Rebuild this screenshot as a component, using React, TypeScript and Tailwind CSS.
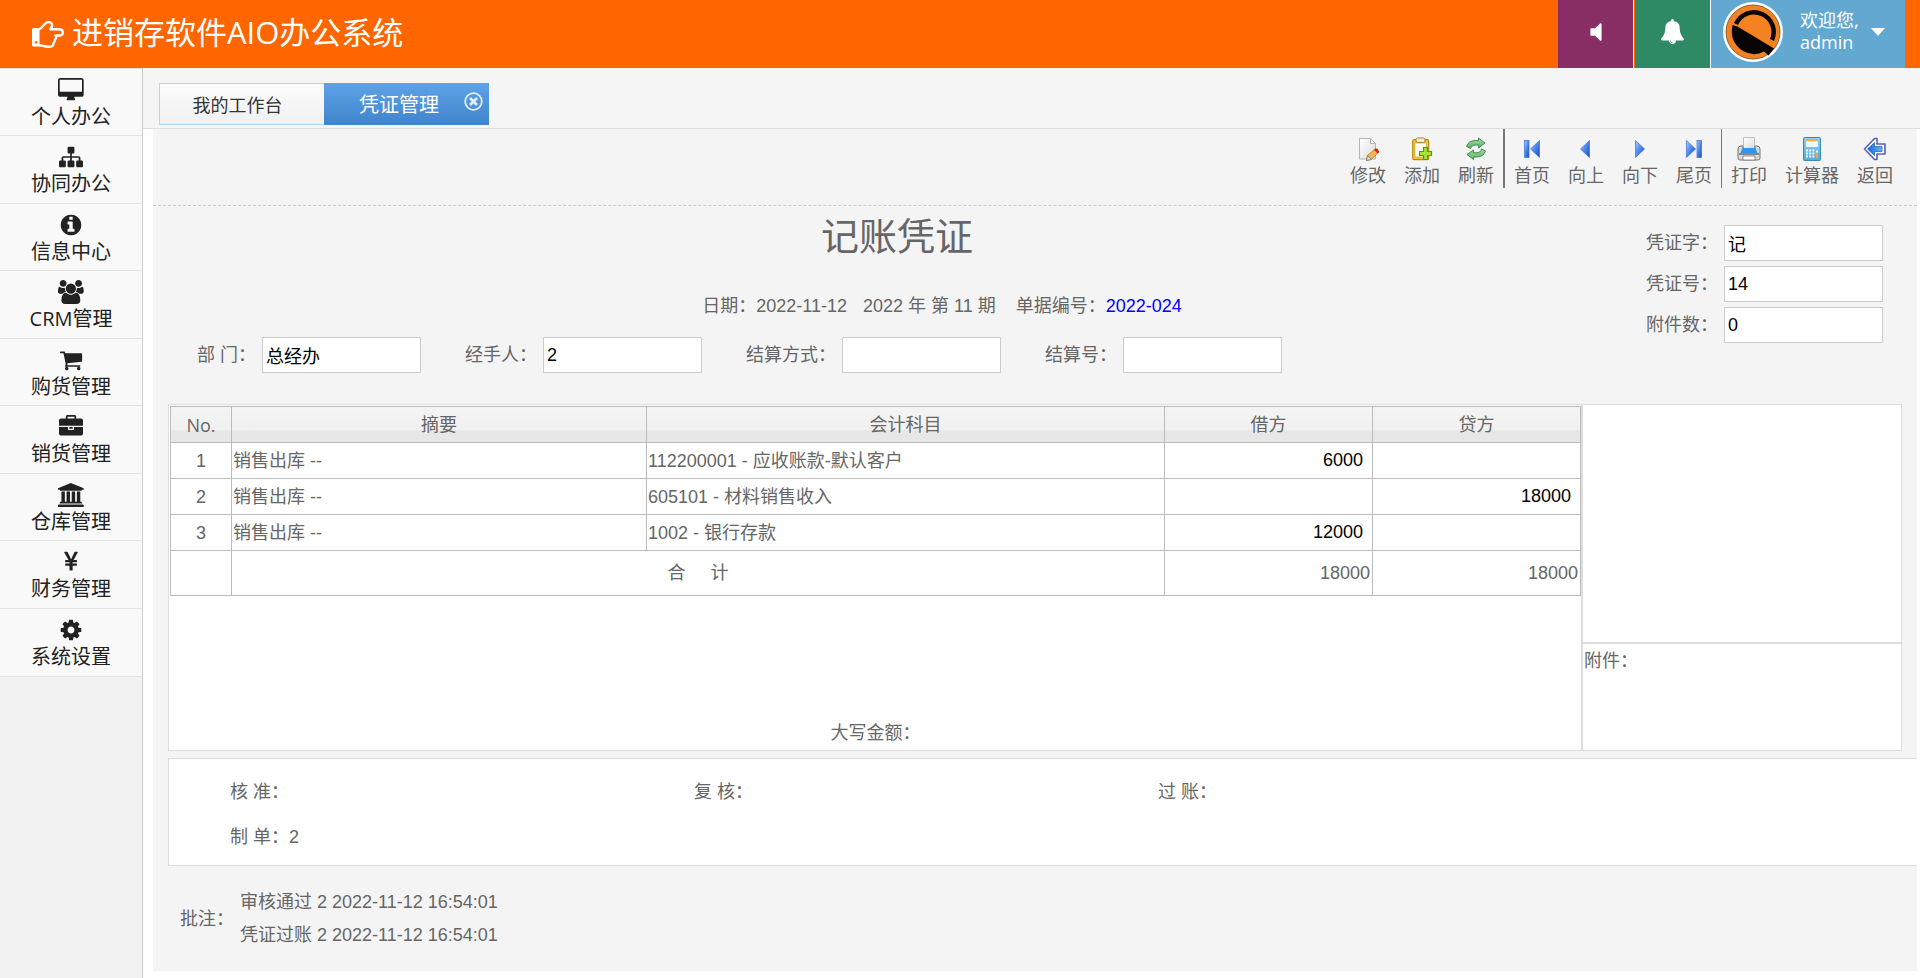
import type { ReactNode } from 'react';

const SANS = "font-['Liberation_Sans','Noto_Sans_CJK_SC',sans-serif]";
const UI = "font-['Open_Sans','Noto_Sans_CJK_SC',sans-serif]";

interface GlyphProps {
  d: string;
  viewBox?: string;
  className?: string;
}

function Glyph({ d, viewBox = '0 0 1792 1792', className = 'h-6' }: GlyphProps) {
  return (
    <svg viewBox={viewBox} className={className} fill="currentColor" aria-hidden>
      <path d={d} />
    </svg>
  );
}

const VOLUME =
  'M1280 352v1088q0 26-19 45t-45 19-45-19l-333-333h-262q-26 0-45-19t-19-45v-384q0-26 19-45t45-19h262l333-333q19-19 45-19t45 19 19 45z';
const BELL =
  'M912 1696q0-16-16-16-59 0-101.500-42.500t-42.500-101.500q0-16-16-16t-16 16q0 73 51.500 124.500t124.500 51.500q16 0 16-16zM1728 1408q0 52-38 90t-90 38h-448q0 106-75 181t-181 75-181-75-75-181h-448q-52 0-90-38t-38-90q50-42 91-88t85-119.500 74.500-158.500 50-206 19.500-260q0-152 117-282.500t307-158.500q-8-19-8-39 0-40 28-68t68-28 68 28 28 68q0 20-8 39 190 28 307 158.500t117 282.500q0 139 19.500 260t50 206 74.500 158.500 85 119.500 91 88z';

const menu = [
  {
    label: '个人办公',
    viewBox: '-64 0 1920 1792',
    d: 'M1728 992v-832q0-13-9.500-22.500t-22.500-9.500h-1600q-13 0-22.500 9.500t-9.500 22.500v832q0 13 9.500 22.500t22.500 9.500h1600q13 0 22.500-9.500t9.500-22.500zM1856 160v1088q0 66-47 113t-113 47h-544q0 37 16 77.500t32 71 16 43.500q0 26-19 45t-45 19h-512q-26 0-45-19t-19-45q0-14 16-44t32-70 16-78h-544q-66 0-113-47t-47-113v-1088q0-66 47-113t113-47h1600q66 0 113 47t47 113z',
  },
  {
    label: '协同办公',
    d: 'M1792 1248v320q0 40-28 68t-68 28h-320q-40 0-68-28t-28-68v-320q0-40 28-68t68-28h96v-192h-512v192h96q40 0 68 28t28 68v320q0 40-28 68t-68 28h-320q-40 0-68-28t-28-68v-320q0-40 28-68t68-28h96v-192h-512v192h96q40 0 68 28t28 68v320q0 40-28 68t-68 28h-320q-40 0-68-28t-28-68v-320q0-40 28-68t68-28h96v-192q0-52 38-90t90-38h512v-192h-96q-40 0-68-28t-28-68v-320q0-40 28-68t68-28h320q40 0 68 28t28 68v320q0 40-28 68t-68 28h-96v192h512q52 0 90 38t38 90v192h96q40 0 68 28t28 68z',
  },
  {
    label: '信息中心',
    d: 'M1152 1376v-160q0-14-9-23t-23-9h-96v-512q0-14-9-23t-23-9h-320q-14 0-23 9t-9 23v160q0 14 9 23t23 9h96v320h-96q-14 0-23 9t-9 23v160q0 14 9 23t23 9h448q14 0 23-9t9-23zM1024 480v-160q0-14-9-23t-23-9h-192q-14 0-23 9t-9 23v160q0 14 9 23t23 9h192q14 0 23-9t9-23zM1664 896q0 209-103 385.500t-279.500 279.500-385.500 103-385.500-103-279.500-279.500-103-385.500 103-385.500 279.500-279.500 385.500-103 385.500 103 279.500 279.500 103 385.500z',
  },
  {
    label: 'CRM管理',
    viewBox: '0 0 1920 1792',
    d: 'M593 896q-162 5-265 128h-134q-82 0-138-40.500t-56-118.500q0-353 124-353 6 0 43.500 21t97.500 42.500 119 21.500q67 0 133-23-5 37-5 66 0 139 81 256zM1664 1533q0 120-73 189.500t-194 69.500h-874q-121 0-194-69.500t-73-189.500q0-53 3.500-103.500t14-109 26.500-108.500 43-97.500 62-81 85.500-53.500 111.500-20q10 0 43 21.500t73 48 107 48 135 21.500 135-21.500 107-48 73-48 43-21.500q61 0 111.500 20t85.500 53.500 62 81 43 97.500 26.500 108.500 14 109 3.500 103.500zM640 256q0 106-75 181t-181 75-181-75-75-181 75-181 181-75 181 75 75 181zM1344 640q0 159-112.500 271.500t-271.500 112.500-271.500-112.500-112.500-271.500 112.500-271.500 271.500-112.500 271.500 112.500 112.500 271.500zM1920 865q0 78-56 118.500t-138 40.500h-134q-103-123-265-128 81-117 81-256 0-29-5-66 66 23 133 23 59 0 119-21.500t97.500-42.500 43.500-21q124 0 124 353zM1792 256q0 106-75 181t-181 75-181-75-75-181 75-181 181-75 181 75 75 181z',
  },
  {
    label: '购货管理',
    d: 'M704 1536q0 52-38 90t-90 38-90-38-38-90 38-90 90-38 90 38 38 90zM1600 1536q0 52-38 90t-90 38-90-38-38-90 38-90 90-38 90 38 38 90zM1728 448v512q0 24-16.500 42.500t-40.500 21.500l-1044 122q13 60 13 70 0 16-24 64h920q26 0 45 19t19 45-19 45-45 19h-1024q-26 0-45-19t-19-45q0-11 8-31.500t16-36 21.500-40 15.500-29.500l-177-823h-204q-26 0-45-19t-19-45 19-45 45-19h256q16 0 28.500 6.500t19.500 15.500 13 24.500 8 26 5.500 29.500 4.500 26h1201q26 0 45 19t19 45z',
  },
  {
    label: '销货管理',
    d: 'M640 256h512v-128h-512v128zM1792 896v480q0 66-47 113t-113 47h-1472q-66 0-113-47t-47-113v-480h672v160q0 26 19 45t45 19h320q26 0 45-19t19-45v-160h672zM1024 896v128h-256v-128h256zM1792 416v384h-1792v-384q0-66 47-113t113-47h352v-160q0-40 28-68t68-28h576q40 0 68 28t28 68v160h352q66 0 113 47t47 113z',
  },
  {
    label: '仓库管理',
    viewBox: '0 0 1920 1792',
    d: 'M960 0l960 384v128h-128q0 26-20.500 45t-48.500 19h-1526q-28 0-48.500-19t-20.500-45h-128v-128zM256 640h256v768h128v-768h256v768h128v-768h256v768h128v-768h256v768h59q28 0 48.500 19t20.500 45v64h-1664v-64q0-26 20.500-45t48.500-19h59v-768zM1851 1600q28 0 48.500 19t20.500 45v128h-1920v-128q0-26 20.500-45t48.500-19h1782z',
  },
  {
    label: '财务管理',
    d: 'M985.500 1536h-172q-13 0-22.500-9t-9.500-23v-330h-288q-13 0-22.500-9t-9.500-23v-103q0-13 9.500-22.500t22.500-9.500h288v-85h-288q-13 0-22.500-9t-9.500-23v-104q0-13 9.500-22.500t22.500-9.500h214l-321-578q-8-16 0-32 10-16 28-16h194q19 0 29 18l215 425q19 38 56 125 10-24 30.500-68t27.500-61l191-420q8-19 29-19h191q17 0 27 16 9 14 1 31l-313 579h215q13 0 22.500 9.500t9.500 22.500v104q0 14-9.500 23t-22.500 9h-290v85h290q13 0 22.500 9.500t9.500 22.500v103q0 14-9.500 23t-22.500 9h-290v330q0 13-9.500 22.500t-22.500 9.500z',
  },
  {
    label: '系统设置',
    d: 'M1152 896q0-106-75-181t-181-75-181 75-75 181 75 181 181 75 181-75 75-181zM1664 787v222q0 12-8 23t-20 13l-185 28q-19 54-39 91 35 50 107 138 10 12 10 25t-9 23q-27 37-99 108t-94 71q-12 0-26-9l-138-108q-44 23-91 38-16 136-29 186-7 28-36 28h-222q-14 0-24.500-8.500t-11.500-21.500l-28-184q-49-16-90-37l-141 107q-10 9-25 9-14 0-25-11-126-114-165-168-7-10-7-23 0-12 8-23 15-21 51-66.500t54-70.500q-27-50-41-99l-183-27q-13-2-21-12.500t-8-23.500v-222q0-12 8-23t19-13l186-28q14-46 39-92-40-57-107-138-10-12-10-24 0-10 9-23 26-36 98.500-107.500t94.500-71.500q13 0 26 10l138 107q44-23 91-38 16-136 29-186 7-28 36-28h222q14 0 24.500 8.500t11.500 21.500l28 184q49 16 90 37l142-107q9-9 24-9 13 0 25 10 129 119 165 170 7 8 7 22 0 12-8 23-15 21-51 66.500t-54 70.500q26 50 41 98l183 28q13 2 21 12.500t8 23.500z',
  },
];

/** Shared gradients for the coloured toolbar icons */
function IconDefs() {
  return (
    <svg className="absolute size-0" aria-hidden>
      <defs>
        <linearGradient id="blue" x1="0" y1="0" x2="1" y2="1">
          <stop offset="0" stopColor="#a9cbfa" />
          <stop offset="0.5" stopColor="#4d86ea" />
          <stop offset="1" stopColor="#1746c4" />
        </linearGradient>
        <linearGradient id="paper" x1="0" y1="0" x2="1" y2="1">
          <stop offset="0" stopColor="#ffffff" />
          <stop offset="1" stopColor="#dcdcdc" />
        </linearGradient>
        <linearGradient id="green" x1="0" y1="0" x2="0" y2="1">
          <stop offset="0" stopColor="#a4dd9c" />
          <stop offset="1" stopColor="#5cb06a" />
        </linearGradient>
        <linearGradient id="calc" x1="0" y1="0" x2="0" y2="1">
          <stop offset="0" stopColor="#8fd0ee" />
          <stop offset="1" stopColor="#5aa9d6" />
        </linearGradient>
        <linearGradient id="arrow" x1="0" y1="0" x2="1" y2="0">
          <stop offset="0" stopColor="#1268d8" />
          <stop offset="1" stopColor="#5fbaf5" />
        </linearGradient>
      </defs>
    </svg>
  );
}

const icons: Record<string, ReactNode> = {
  edit: (
    <>
      <path d="M3.500 1.500h11l5 5v15.500h-16z" fill="url(#paper)" stroke="#b5b5b5" />
      <path d="M14.500 1.500v5h5z" fill="#f4f4f4" stroke="#b5b5b5" />
      <path d="M10.500 23.500l1-5 8-7 3.500 3.500-8 7.500z" fill="#f3b64e" stroke="#b07a2a" strokeWidth="0.800" />
      <path d="M18 12.800l1.500-1.300q3-.5 3.500 3.500l-1.500 1.400z" fill="#e02020" />
      <path d="M10.500 23.500l1-5 4 4z" fill="#ddd" stroke="#777" strokeWidth="0.800" />
    </>
  ),
  add: (
    <>
      <rect x="2.700" y="2.700" width="16" height="20" rx="1.500" fill="#f2c73a" stroke="#b88a12" strokeWidth="1.200" />
      <rect x="5" y="6" width="11.500" height="14" fill="#fffef4" stroke="#c9a13a" strokeWidth="0.700" />
      <rect x="6" y="1" width="9" height="4.500" rx="1.500" fill="#f7eccb" stroke="#a9842a" />
      <path d="M13.500 10.500h4v4h4v4h-4v4h-4v-4h-4v-4h4z" fill="#a5e23a" stroke="#5c9a14" strokeWidth="1.200" />
    </>
  ),
  refresh: (
    <g fill="url(#green)" stroke="#3f8a52" strokeLinejoin="round">
      <path d="M2.500 9.500q2-6 9-6h3v-2.500l6.500 5-6.500 5v-3h-3q-4-.2-5 3.500z" />
      <path d="M21.500 14q-2 6-9 6h-3v2.500l-6.500-5 6.500-4.500v2.800h3q4 .2 5-3.800z" />
    </g>
  ),
  first: (
    <g fill="url(#blue)" stroke="#3a6fe0" strokeWidth="0.700">
      <rect x="4.500" y="3.500" width="4.500" height="17" />
      <path d="M19.500 3.500v17l-9-8.500z" />
    </g>
  ),
  prev: <path d="M15.500 3.500v17l-9-8.500z" fill="url(#blue)" stroke="#3a6fe0" strokeWidth="0.700" />,
  next: <path d="M7.500 3.500v17l9-8.500z" fill="url(#blue)" stroke="#3a6fe0" strokeWidth="0.700" />,
  last: (
    <g fill="url(#blue)" stroke="#3a6fe0" strokeWidth="0.700">
      <rect x="15" y="3.500" width="4.500" height="17" />
      <path d="M4.500 3.500v17l9-8.500z" />
    </g>
  ),
  print: (
    <>
      <path d="M6.500 .5h11v11h-11z" fill="url(#paper)" stroke="#b9c2cc" />
      <path d="M1 12q0-3 3-3h2v3.500h12v-3.500h2q3 0 3 3v9q0 2-2 2h-18q-2 0-2-2z" fill="#d9d9d9" stroke="#777" />
      <path d="M5.500 11h13l2 5h-17z" fill="#2f95ee" />
      <path d="M2 17h20" stroke="#6d6d6d" strokeWidth="1.500" />
      <path d="M6 19h12v4h-12z" fill="#fff" stroke="#777" strokeWidth="0.800" />
    </>
  ),
  calculator: (
    <>
      <rect x="3.500" y=".5" width="17" height="23" rx="1" fill="url(#calc)" stroke="#3b86b5" />
      <rect x="6" y="3" width="12" height="7" fill="#eef7fc" />
      <path d="M6 3.500h12" stroke="#f0a93c" strokeWidth="1.500" />
      <path d="M6 13.500h9M6 16.500h9M6 19.500h9" stroke="#f2fafe" strokeWidth="1.800" strokeDasharray="2 1.200" />
      <path d="M17 13.500v2" stroke="#f2fafe" strokeWidth="2" />
      <path d="M17 16.500v4.500" stroke="#f0a93c" strokeWidth="2" />
    </>
  ),
  back: (
    <>
      <path d="M1.500 12l10-10.500h2.500v5.500h8v10h-8v5.500h-2.500z" fill="#fff" stroke="#5560b8" strokeWidth="1.600" strokeLinejoin="round" />
      <path d="M4.500 12l7-6.500v4h7.500v5h-7.500v4z" fill="url(#arrow)" stroke="#1b56b8" strokeWidth="0.700" />
    </>
  ),
};

const toolGroups = [
  [
    { icon: 'edit', label: '修改' },
    { icon: 'add', label: '添加' },
    { icon: 'refresh', label: '刷新' },
  ],
  [
    { icon: 'first', label: '首页' },
    { icon: 'prev', label: '向上' },
    { icon: 'next', label: '向下' },
    { icon: 'last', label: '尾页' },
  ],
  [
    { icon: 'print', label: '打印' },
    { icon: 'calculator', label: '计算器' },
    { icon: 'back', label: '返回' },
  ],
];

const fields = [
  { id: 'dept', label: '部 门：', value: '总经办' },
  { id: 'handler', label: '经手人：', value: '2' },
  { id: 'method', label: '结算方式：', value: '' },
  { id: 'settle', label: '结算号：', value: '' },
];

const voucherFields = [
  { id: 'word', label: '凭证字：', value: '记' },
  { id: 'number', label: '凭证号：', value: '14' },
  { id: 'attach', label: '附件数：', value: '0' },
];

const entries = [
  { summary: '销售出库 --', account: '112200001 - 应收账款-默认客户', debit: '6000', credit: '' },
  { summary: '销售出库 --', account: '605101 - 材料销售收入', debit: '', credit: '18000' },
  { summary: '销售出库 --', account: '1002 - 银行存款', debit: '12000', credit: '' },
];

function Field({ id, label, value }: { id: string; label: string; value: string }) {
  return (
    <div className="flex items-center gap-1.5">
      <label htmlFor={id} className="whitespace-nowrap">
        {label}
      </label>
      <input
        id={id}
        defaultValue={value}
        className="h-9 w-[159px] border border-[#ccc] bg-white px-[3px] text-black outline-none"
      />
    </div>
  );
}

function Header() {
  return (
    <header className={`flex h-[68px] shrink-0 bg-[#ff6600] text-white ${UI}`}>
      <h1 className="flex flex-1 items-center gap-2 pl-8 text-[31px] leading-[64px]">
        <svg viewBox="0 0 32 27" className="w-8" fill="none" stroke="currentColor" strokeWidth="2.400" strokeLinejoin="round" aria-hidden>
          <path d="M0 8.500q0-1.500 1.500-1.500h6v18.500h-6q-1.500 0-1.500-1.500zM4 20a1.300 1.300 0 1 0 .1 0z" fill="currentColor" stroke="none" fillRule="evenodd" />
          <path d="M7 8.300q1.500-.3 3.500-2.800t3.500-3.500q2.500-1.500 4.500-.5t1.500 3.500q-.5 1.500-1.700 3.200h9.700q2.800.4 2.800 3.200t-2.800 3.100h-4.500q1.500 2-.7 4.500 0 2-1.500 3.500.3 3.200-3.300 3.200-4 .2-7-.8-2.500-.7-4-.7" />
        </svg>
        <span className="pb-1">进销存软件AIO办公系统</span>
      </h1>
      <button aria-label="声音" className="flex w-[76px] items-center justify-center border-r border-white bg-[#892e65] pb-1">
        <Glyph d={VOLUME} className="size-[26px]" />
      </button>
      <button aria-label="通知" className="ml-px flex w-[76px] items-center justify-center border-r border-white bg-[#2e8965] pb-1.5">
        <Glyph d={BELL} className="size-[25px]" />
      </button>
      <button className="mr-[15px] flex w-[194px] items-start bg-[#62a8d1] pt-0.5 pl-3 text-left">
        <svg viewBox="0 0 60 60" className="size-[60px]" aria-hidden>
          <circle cx="30" cy="30" r="30" fill="#fff" />
          <circle cx="30" cy="30" r="27" fill="#f58220" stroke="#6b4a2a" strokeWidth="0.800" />
          <path d="M13 22A19 19 0 1 1 49 38" fill="none" stroke="#080404" strokeWidth="4.500" />
          <path d="M14.500 24.500L51 46.500 45.500 53.500 41 49.500Q31 55 20 49 6 40 9.500 23z" fill="#080404" />
        </svg>
        <span className="ml-[17px] flex-1 pt-[7px] text-lg leading-[22px]">
          欢迎您,
          <br />
          admin
        </span>
        <svg viewBox="0 0 14 8" className="mt-[26px] mr-5 w-3.5" fill="currentColor" aria-hidden>
          <path d="M0 0h14l-7 8z" />
        </svg>
      </button>
    </header>
  );
}

function Sidebar() {
  return (
    <nav className="w-[143px] shrink-0 border-r border-[#ccc] bg-[#f2f2f2]">
      {menu.map(({ label, d, viewBox }) => (
        <a
          key={label}
          href="#"
          className={`flex flex-col items-center border-t border-[#e2e2e2] bg-[#f9f9f9] pt-[9px] text-xl leading-[30px] text-[#222] odd:h-[67px] even:h-[68px] last:h-[69px]! last:border-b ${UI}`}
        >
          <Glyph d={d} viewBox={viewBox} className="h-6 shrink-0" />
          {label}
        </a>
      ))}
    </nav>
  );
}

function Tabs() {
  return (
    <div className={`flex h-[61px] shrink-0 border-b border-[#ddd] bg-[#f5f5f5] pt-[15px] pl-4 ${UI}`}>
      <button className="h-[42px] w-[165px] border border-r-0 border-[#b4d5f2] bg-linear-to-b from-[#fcfcfc] to-[#f0f0f0] pt-0.5 pr-10 pl-[31px] text-lg whitespace-nowrap text-[#333]">
        我的工作台
      </button>
      <div className="flex h-[42px] w-[165px] bg-linear-to-b from-[#5ea2e7] to-[#4084cc] pl-[35px] text-white">
        <button className="pt-0.5 text-xl whitespace-nowrap">凭证管理</button>
        <button aria-label="关闭" className="mt-[9px] ml-[25px] size-[19px]">
          <svg viewBox="0 0 19 19" fill="none" stroke="#e3eefa" aria-hidden>
            <circle cx="9.500" cy="9.500" r="8.300" strokeWidth="1.800" />
            <path d="M6 6l7 7M13 6l-7 7" strokeWidth="2.800" />
          </svg>
        </button>
      </div>
    </div>
  );
}

function Toolbar() {
  return (
    <div className="flex h-[77px] justify-end border-b border-dashed border-[#ccc] pr-[15px]">
      {toolGroups.map((group, i) => (
        <div
          key={i}
          className="flex h-[59px] border-[#777] not-first:border-l first:border-r"
        >
          {group.map(({ icon, label }) => (
            <button key={icon} className="flex flex-col items-center gap-[3px] px-[9px] pt-2 text-lg leading-6">
              <svg viewBox="0 0 24 24" className="size-6 shrink-0" aria-hidden>
                {icons[icon]}
              </svg>
              {label}
            </button>
          ))}
        </div>
      ))}
    </div>
  );
}

function Amount({ label, value }: { label: string; value: string }) {
  return (
    <td className="border border-[#bbb] p-0">
      <input
        aria-label={label}
        defaultValue={value}
        className="block h-[35px] w-full bg-transparent pr-[9px] text-right text-black outline-none"
      />
    </td>
  );
}

function EntryTable() {
  const head = 'border border-[#bbb] font-normal';
  const cell = 'border border-[#bbb] px-px';
  const total = 'border border-[#bbb] pr-0.5 text-right';
  return (
    <table className="w-full table-fixed border-collapse">
      <colgroup>
        <col className="w-[61px]" />
        <col className="w-[415px]" />
        <col />
        <col className="w-[208px]" />
        <col className="w-[208px]" />
      </colgroup>
      <thead>
        <tr className="h-9 bg-linear-to-b from-[#f4f4f4] via-[#f0f0f0] via-64% to-[#e7e7e7] to-66%">
          <th className={`${head} ${UI}`}>No.</th>
          <th className={head}>摘要</th>
          <th className={head}>会计科目</th>
          <th className={head}>借方</th>
          <th className={head}>贷方</th>
        </tr>
      </thead>
      <tbody>
        {entries.map(({ summary, account, debit, credit }, i) => (
          <tr key={account} className="h-9">
            <td className={`${cell} text-center`}>{i + 1}</td>
            <td className={cell}>{summary}</td>
            <td className={cell}>{account}</td>
            <Amount label={`借方 ${i + 1}`} value={debit} />
            <Amount label={`贷方 ${i + 1}`} value={credit} />
          </tr>
        ))}
        <tr className="h-[45px]">
          <td className={cell} />
          <td colSpan={2} className={`${cell} text-center`}>
            合&nbsp;&nbsp;&nbsp;&nbsp;&nbsp;计
          </td>
          <td className={total}>18000</td>
          <td className={total}>18000</td>
        </tr>
      </tbody>
    </table>
  );
}

function Voucher() {
  return (
    <main className={`mr-[3px] mb-[7px] ml-2.5 flex-1 bg-[#f4f4f4] text-lg leading-6 text-[#666] ${SANS}`}>
      <Toolbar />

      <section className="flex h-[198px]">
        <div className="flex-1">
          <h2 className="pt-[7px] text-center text-[38px] leading-[48px]">记账凭证</h2>
          <p className="mt-[31px] flex justify-center pl-[90px] leading-7 whitespace-nowrap">
            <span>日期：2022-11-12</span>
            <span className="ml-4">2022 年 第 11 期</span>
            <span className="ml-5">单据编号：</span>
            <a href="#" className="text-[#0000ff]">
              2022-024
            </a>
          </p>
          <div className="mt-[17px] flex gap-11 pl-11">
            {fields.map(field => (
              <Field key={field.id} {...field} />
            ))}
          </div>
        </div>
        <div className="flex w-[276px] flex-col gap-[5px] pt-[19px] pl-[5px]">
          {voucherFields.map(field => (
            <Field key={field.id} {...field} />
          ))}
        </div>
      </section>

      <section className="mr-[15px] ml-[15px] flex h-[347px] border border-[#ddd] bg-white">
        <div className="flex flex-1 flex-col justify-between pt-px pl-px">
          <EntryTable />
          <p className="pb-[5px] text-center">大写金额：</p>
        </div>
        <div className="flex w-80 flex-col border-l-2 border-[#ddd]">
          <div className="flex-1" />
          <div className="h-[108px] border-t-2 border-[#ddd] px-px pt-[5px]">附件：</div>
        </div>
      </section>

      <section className="mt-[7px] ml-[15px] grid h-[108px] grid-cols-[464px_464px_1fr] content-start gap-y-[21px] border border-r-0 border-[#ddd] bg-white pt-[21px] pl-[61px]">
        <span>核 准：</span>
        <span>复 核：</span>
        <span>过 账：</span>
        <span>制 单：2</span>
      </section>

      <section className="mt-5 flex items-center gap-1.5 pl-[27px] leading-[33px]">
        <span>批注：</span>
        <div>
          <p>审核通过 2 2022-11-12 16:54:01</p>
          <p>凭证过账 2 2022-11-12 16:54:01</p>
        </div>
      </section>
    </main>
  );
}

export default function App() {
  return (
    <div className="flex min-h-screen flex-col bg-white">
      <IconDefs />
      <Header />
      <div className="flex flex-1">
        <Sidebar />
        <div className="flex min-w-0 flex-1 flex-col">
          <Tabs />
          <Voucher />
        </div>
      </div>
    </div>
  );
}
